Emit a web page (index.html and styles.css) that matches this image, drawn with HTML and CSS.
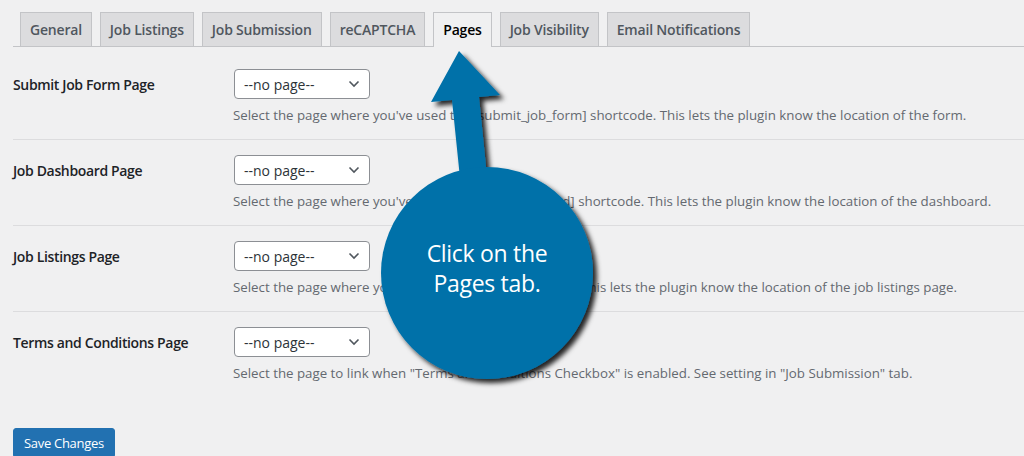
FILE: index.html
```html
<!DOCTYPE html>
<html>
<head>
<meta charset="utf-8">
<link rel="stylesheet" href="styles.css">
</head>
<body>
<div class="wrap">
  <nav class="tabs">
    <a class="tab">General</a>
    <a class="tab">Job Listings</a>
    <a class="tab">Job Submission</a>
    <a class="tab">reCAPTCHA</a>
    <a class="tab active">Pages</a>
    <a class="tab">Job Visibility</a>
    <a class="tab">Email Notifications</a>
  </nav>
  <div class="form">
    <div class="row">
      <div class="label">Submit Job Form Page</div>
      <div class="field">
        <div class="select"><span>--no page--</span><svg class="chev" width="12" height="8" viewBox="0 0 12 8"><path d="M1.5 1.5 L6 6 L10.5 1.5" fill="none" stroke="#50575e" stroke-width="1.6"/></svg></div>
        <p class="desc">Select the page where you've used the [submit_job_form] shortcode. This lets the plugin know the location of the form.</p>
      </div>
    </div>
    <div class="row">
      <div class="label">Job Dashboard Page</div>
      <div class="field">
        <div class="select"><span>--no page--</span><svg class="chev" width="12" height="8" viewBox="0 0 12 8"><path d="M1.5 1.5 L6 6 L10.5 1.5" fill="none" stroke="#50575e" stroke-width="1.6"/></svg></div>
        <p class="desc">Select the page where you've used the [job_dashboard] shortcode. This lets the plugin know the location of the dashboard.</p>
      </div>
    </div>
    <div class="row">
      <div class="label">Job Listings Page</div>
      <div class="field">
        <div class="select"><span>--no page--</span><svg class="chev" width="12" height="8" viewBox="0 0 12 8"><path d="M1.5 1.5 L6 6 L10.5 1.5" fill="none" stroke="#50575e" stroke-width="1.6"/></svg></div>
        <p class="desc">Select the page where you've used the [jobs] shortcode. This lets the plugin know the location of the job listings page.</p>
      </div>
    </div>
    <div class="row last">
      <div class="label">Terms and Conditions Page</div>
      <div class="field">
        <div class="select"><span>--no page--</span><svg class="chev" width="12" height="8" viewBox="0 0 12 8"><path d="M1.5 1.5 L6 6 L10.5 1.5" fill="none" stroke="#50575e" stroke-width="1.6"/></svg></div>
        <p class="desc">Select the page to link when "Terms and Conditions Checkbox" is enabled. See setting in "Job Submission" tab.</p>
      </div>
    </div>
    <div class="submit">
      <button class="button">Save Changes</button>
    </div>
  </div>
</div>
<div class="callout">
  <svg class="callout-art" width="1024" height="456" viewBox="0 0 1024 456">
    <defs>
      <filter id="sh" x="-20%" y="-20%" width="150%" height="150%">
        <feDropShadow dx="4" dy="4" stdDeviation="2.5" flood-color="#000" flood-opacity="0.85"/>
      </filter>
    </defs>
    <g filter="url(#sh)" fill="#0071a9">
      <polygon points="459,51 431,102 452,100 460,178 487,176 479,97 500,95"/>
      <circle cx="487" cy="273" r="106"/>
    </g>
  </svg>
  <div class="bubble-text">Click on the<br>Pages tab.</div>
</div>
</body>
</html>
```

FILE: styles.css
```css
html, body {
  margin: 0;
  padding: 0;
}
body {
  background: #f0f0f1;
  font-family: "Open Sans", "Noto Sans", sans-serif;
  color: #3c434a;
  width: 1024px;
  height: 456px;
  overflow: hidden;
  position: relative;
}
.wrap {
  padding-left: 13px;
}
.tabs {
  display: flex;
  gap: 8px;
  padding: 12px 0 0 7px;
  border-bottom: 1px solid #c3c4c7;
}
.tab {
  display: block;
  height: 33px;
  line-height: 33px;
  padding: 0 9px;
  background: #dcdcde;
  border: 1px solid #c3c4c7;
  border-bottom: none;
  font-size: 14px;
  font-weight: 600;
  color: #50575e;
  margin-bottom: -1px;
  letter-spacing: -0.2px;
}
.tab.active {
  background: #f0f0f1;
  color: #000;
  height: 34px;
}
.form {
  padding-top: 7px;
}
.row {
  display: flex;
  padding: 15px 0;
  border-bottom: 1px solid #dcdcde;
}
.row.last {
  border-bottom: none;
}
.label {
  width: 221px;
  flex: none;
  font-size: 14px;
  font-weight: 600;
  color: #1d2327;
  line-height: 31px;
  letter-spacing: -0.35px;
}
.field {
  flex: 1;
}
.select {
  box-sizing: border-box;
  width: 136px;
  height: 30px;
  border: 1px solid #8c8f94;
  border-radius: 4px;
  background: #fff;
  display: flex;
  align-items: center;
  justify-content: space-between;
  padding: 0 9px 0 9px;
  font-size: 14px;
  color: #2c3338;
}
.desc {
  margin: 7px 0 0 -1px;
  font-size: 13.3px;
  line-height: 18px;
  color: #646970;
}
.submit {
  padding-top: 31px;
}
.button {
  font-family: inherit;
  background: #2271b1;
  border: 1px solid #2271b1;
  border-radius: 3px;
  color: #fff;
  font-size: 13px;
  height: 30px;
  padding: 0 10px;
  letter-spacing: -0.3px;
}
.callout {
  position: absolute;
  left: 0;
  top: 0;
  width: 1024px;
  height: 456px;
  pointer-events: none;
}
.callout-art {
  position: absolute;
  left: 0;
  top: 0;
}
.bubble-text {
  position: absolute;
  left: 387px;
  top: 238px;
  width: 200px;
  text-align: center;
  color: #fff;
  font-size: 23px;
  line-height: 30px;
  letter-spacing: -0.3px;
}
```
